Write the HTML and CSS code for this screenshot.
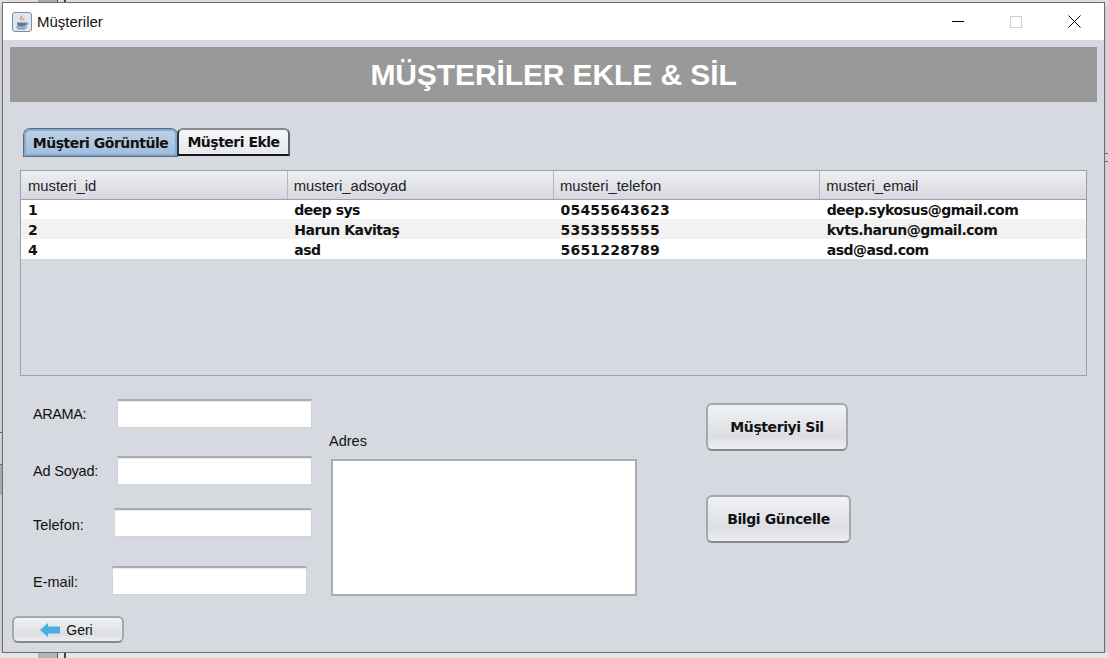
FILE: index.html
```html
<!DOCTYPE html>
<html lang="tr">
<head>
  <meta charset="UTF-8">
  <title>Müşteriler</title>
  <meta name="viewport" content="width=device-width, initial-scale=1.0">
  <link rel="stylesheet" href="styles.css">
</head>
<body>

  <!-- other windows showing behind this one -->
  <div class="behind behind-block"></div>
  <div class="behind behind-line"></div>
  <div class="behind behind-dark"></div>
  <div class="behind behind-left-a"></div>
  <div class="behind behind-left-b"></div>
  <div class="behind behind-right-a"></div>
  <div class="behind behind-right-b"></div>

  <div class="window">
    <header class="titlebar">
      <svg class="app-icon" width="20" height="20" viewBox="0 0 20 20">
        <rect x="0.5" y="0.5" width="19" height="19" rx="2.5" fill="#dfe6ee" stroke="#7d8ea3"/>
        <path d="M10.5 3c1 1.500-2 2.500-1 4.500 .3 .6 .6 1 .8 1.500-1.800-1-2.800-2.300-1.900-3.700 .6-.9 1.700-1.300 2.100-2.300z" fill="#e2762a"/>
        <path d="M12.500 5.500c-1 .7-1.700 1.300-1 2.500 .2 .4 .2 .7 0 1 1-.5 1.200-1.200.7-2-.3-.6-.1-1 .3-1.500z" fill="#e2762a"/>
        <path d="M5 10.500h9v1.500c0 1.300-1 2.200-2.200 2.200H7.200C6 14.200 5 13.300 5 12z" fill="#5d7a99"/>
        <path d="M14 11h1.300c.9 0 .9 1.800-1.500 2" fill="none" stroke="#5d7a99"/>
        <path d="M4 15h11M5.500 16.800h8" stroke="#5d7a99" fill="none"/>
      </svg>
      <span class="title-text">Müşteriler</span>
      <div class="win-controls">
        <svg class="win-btn" width="12" height="12" viewBox="0 0 12 12"><path d="M0 5.500h12" stroke="#000"/></svg>
        <svg class="win-btn" width="12" height="12" viewBox="0 0 12 12"><rect x="0.500" y="0.500" width="11" height="11" fill="none" stroke="#ccc"/></svg>
        <svg class="win-btn" width="13" height="13" viewBox="0 0 13 13"><path d="M0.500 0.500l12 12M12.500 0.500l-12 12" stroke="#000"/></svg>
      </div>
    </header>

    <main class="content">
      <h1 class="banner">MÜŞTERİLER EKLE &amp; SİL</h1>

      <div class="tabs">
        <button class="tab tab-active" type="button">Müşteri Görüntüle</button>
        <button class="tab" type="button">Müşteri Ekle</button>
      </div>

      <div class="table-box">
        <table class="grid">
          <thead>
            <tr>
              <th>musteri_id</th>
              <th>musteri_adsoyad</th>
              <th>musteri_telefon</th>
              <th>musteri_email</th>
            </tr>
          </thead>
          <tbody>
            <tr>
              <td>1</td>
              <td>deep sys</td>
              <td class="phone">05455643623</td>
              <td>deep.sykosus@gmail.com</td>
            </tr>
            <tr>
              <td>2</td>
              <td>Harun Kavitaş</td>
              <td class="phone">5353555555</td>
              <td>kvts.harun@gmail.com</td>
            </tr>
            <tr>
              <td>4</td>
              <td>asd</td>
              <td class="phone">5651228789</td>
              <td>asd@asd.com</td>
            </tr>
          </tbody>
        </table>
      </div>

      <form class="editor">
        <div class="fields">
          <div class="field field-search">
            <label for="arama">ARAMA:</label>
            <input type="text" id="arama">
          </div>
          <div class="field field-name">
            <label for="adsoyad">Ad Soyad:</label>
            <input type="text" id="adsoyad">
          </div>
          <div class="field field-phone">
            <label for="telefon">Telefon:</label>
            <input type="text" id="telefon">
          </div>
          <div class="field field-mail">
            <label for="email">E-mail:</label>
            <input type="text" id="email">
          </div>
        </div>

        <div class="address">
          <label for="adres">Adres</label>
          <textarea id="adres"></textarea>
        </div>

        <div class="actions">
          <button class="btn btn-delete" type="button">Müşteriyi Sil</button>
          <button class="btn btn-update" type="button">Bilgi Güncelle</button>
        </div>
      </form>

      <button class="btn-back" type="button">
        <svg width="20" height="16" viewBox="0 0 20 16"><path d="M0 8L8 1V4.500H20V11.500H8V15z" fill="#4aaee3"/></svg>
        Geri
      </button>
    </main>
  </div>

</body>
</html>
```

FILE: styles.css
```css
body {
  margin: 0;
  background-color: #e6e6e6;
  font-family: "Liberation Sans", Arial, sans-serif;
  overflow: hidden;
}

.behind {
  position: absolute;
}

.behind-block {
  left: 38px;
  top: 0;
  width: 19px;
  height: 658px;
  background-color: #b4b4b4;
}

.behind-line {
  left: 57px;
  top: 0;
  width: 1px;
  height: 658px;
  background-color: #555;
}

.behind-dark {
  left: 64px;
  top: 0;
  width: 2px;
  height: 658px;
  background-color: #444;
}

.behind-left-a {
  left: 0;
  top: 432px;
  width: 2px;
  height: 31px;
  border-top: 1px solid #777;
  border-bottom: 1px solid #777;
}

.behind-left-b {
  left: 0;
  top: 465px;
  width: 2px;
  height: 30px;
  background-color: #bbb;
}

.behind-right-a {
  left: 1105px;
  top: 153px;
  width: 3px;
  height: 1px;
  background-color: #777;
}

.behind-right-b {
  left: 1105px;
  top: 161px;
  width: 3px;
  height: 1px;
  background-color: #777;
}

.window {
  position: relative;
  width: 1103px;
  height: 651px;
  margin: 2px 0 0 2px;
  border: 1px solid #6e6e6e;
  box-sizing: border-box;
  display: flex;
  flex-direction: column;
  background-color: #d6d9e0;
  box-shadow: 0 3px 8px rgba(0,0,0,0.25);
}

.titlebar {
  height: 37px;
  background-color: white;
  display: flex;
  align-items: center;
  padding-left: 9px;
  flex-shrink: 0;
}

.app-icon {
  margin-right: 5px;
}

.title-text {
  font-size: 15px;
  color: #111;
}

.win-controls {
  margin-left: auto;
  display: flex;
  align-items: center;
}

.win-btn {
  margin-right: 46px;
}

.win-btn:last-child {
  margin-right: 23px;
}

.content {
  flex: 1;
  padding: 7px 7px 0 7px;
}

.banner {
  margin: 0;
  height: 55px;
  line-height: 55px;
  background-color: #999999;
  color: white;
  text-align: center;
  font-size: 30px;
  font-weight: bold;
  letter-spacing: -0.1px;
}

.tabs {
  display: flex;
  margin: 26px 0 0 13px;
  height: 28px;
}

.tab {
  font-family: "DejaVu Sans", Verdana, sans-serif;
  font-size: 14px;
  font-weight: bold;
  color: #111;
  padding: 0;
  height: 28px;
  width: 113px;
  background: linear-gradient(#f7f7f9, #e6e8ec);
  border: 2px solid #858a92;
  border-right-color: #5f646c;
  border-bottom: 2px solid #15171a;
  border-left-color: #30343a;
  border-radius: 6px 6px 0 0;
  letter-spacing: -0.5px;
}

.tab-active {
  width: 153px;
  background: linear-gradient(#bdd0e4, #a3bfdc);
  border: 2px solid #7fabd8;
  border-bottom: 2px solid #7fa9d4;
  box-shadow: 0 0 0 1px #5e6a78;
  margin: 1px 0 0 1px;
  height: 27px;
}

.table-box {
  margin: 14px 0 0 10px;
  width: 1067px;
  height: 206px;
  border: 1px solid #9ca0a8;
  box-sizing: border-box;
}

.grid {
  width: 100%;
  table-layout: fixed;
  border-collapse: collapse;
}

.grid th {
  height: 28px;
  padding: 2px 0 0 7px;
  box-sizing: border-box;
  font-size: 14.8px;
  font-weight: normal;
  text-align: left;
  color: #222;
  background: linear-gradient(#eeeff2, #d6d8de);
  border-right: 1px solid #b4b7be;
  border-bottom: 1px solid #9ca0a8;
}

.grid th:last-child {
  border-right: none;
}

.grid th:nth-child(n+2) {
  padding-left: 6px;
}

.grid td {
  height: 20px;
  padding: 2px 0 0 7px;
  box-sizing: border-box;
  font-family: "DejaVu Sans", Verdana, sans-serif;
  font-size: 14px;
  font-weight: bold;
  color: #111;
  background-color: white;
  letter-spacing: -0.5px;
}

.grid td.phone {
  letter-spacing: 0.2px;
}

.grid tbody tr:nth-child(2) td {
  background-color: #f2f2f2;
}

.editor {
  display: flex;
  margin-top: 23px;
  height: 197px;
}

.fields {
  width: 310px;
  flex-shrink: 0;
  display: flex;
  flex-direction: column;
}

.field {
  display: flex;
  align-items: center;
  padding-left: 23px;
  font-size: 14.5px;
  color: #111;
}

.field input {
  background-color: white;
  border: 1px solid #d0d3d8;
  border-top: 2px solid #a9acb2;
  box-sizing: border-box;
  outline: none;
  box-shadow: inset 0 1px 1px #e8e8e8;
  height: 29px;
}

.field-search label,
.field-name label {
  width: 84px;
}

.field-search label {
  letter-spacing: -0.4px;
}

.field-name label {
  letter-spacing: -0.2px;
}

.field-search input,
.field-name input {
  width: 195px;
}

.field-name {
  margin-top: 28px;
}

.field-phone {
  margin-top: 23px;
}

.field-phone label {
  width: 81px;
  padding-top: 4px;
}

.field-phone input {
  width: 198px;
}

.field-mail {
  margin-top: 29px;
}

.field-mail label {
  width: 79px;
  padding-top: 2px;
}

.field-mail input {
  width: 195px;
}

.address {
  display: flex;
  flex-direction: column;
  width: 309px;
  margin-left: 9px;
  padding-top: 34px;
  font-size: 14.5px;
  color: #111;
}

.address textarea {
  width: 306px;
  height: 137px;
  margin: 10px 0 0 2px;
  background-color: white;
  border: 2px solid #a9acb2;
  box-sizing: border-box;
  outline: none;
  resize: none;
}

.actions {
  margin-left: 68px;
  padding-top: 4px;
  display: flex;
  flex-direction: column;
  align-items: flex-start;
}

.btn,
.btn-back {
  background: linear-gradient(#f1f2f4, #dcdee3 70%, #eceef1);
  border: 2px solid #a4a8af;
  border-bottom-color: #85898f;
  border-radius: 6px;
  color: #111;
  padding: 0;
}

.btn {
  font-family: "DejaVu Sans", Verdana, sans-serif;
  font-size: 14px;
  font-weight: bold;
  height: 48px;
  letter-spacing: -0.4px;
}

.btn-delete {
  width: 142px;
}

.btn-update {
  width: 145px;
  margin-top: 44px;
}

.btn-back {
  display: flex;
  align-items: center;
  justify-content: center;
  gap: 6px;
  width: 112px;
  height: 27px;
  margin: 20px 0 0 2px;
  padding-right: 3px;
  font-family: "Liberation Sans", Arial, sans-serif;
  font-size: 14px;
}
```
